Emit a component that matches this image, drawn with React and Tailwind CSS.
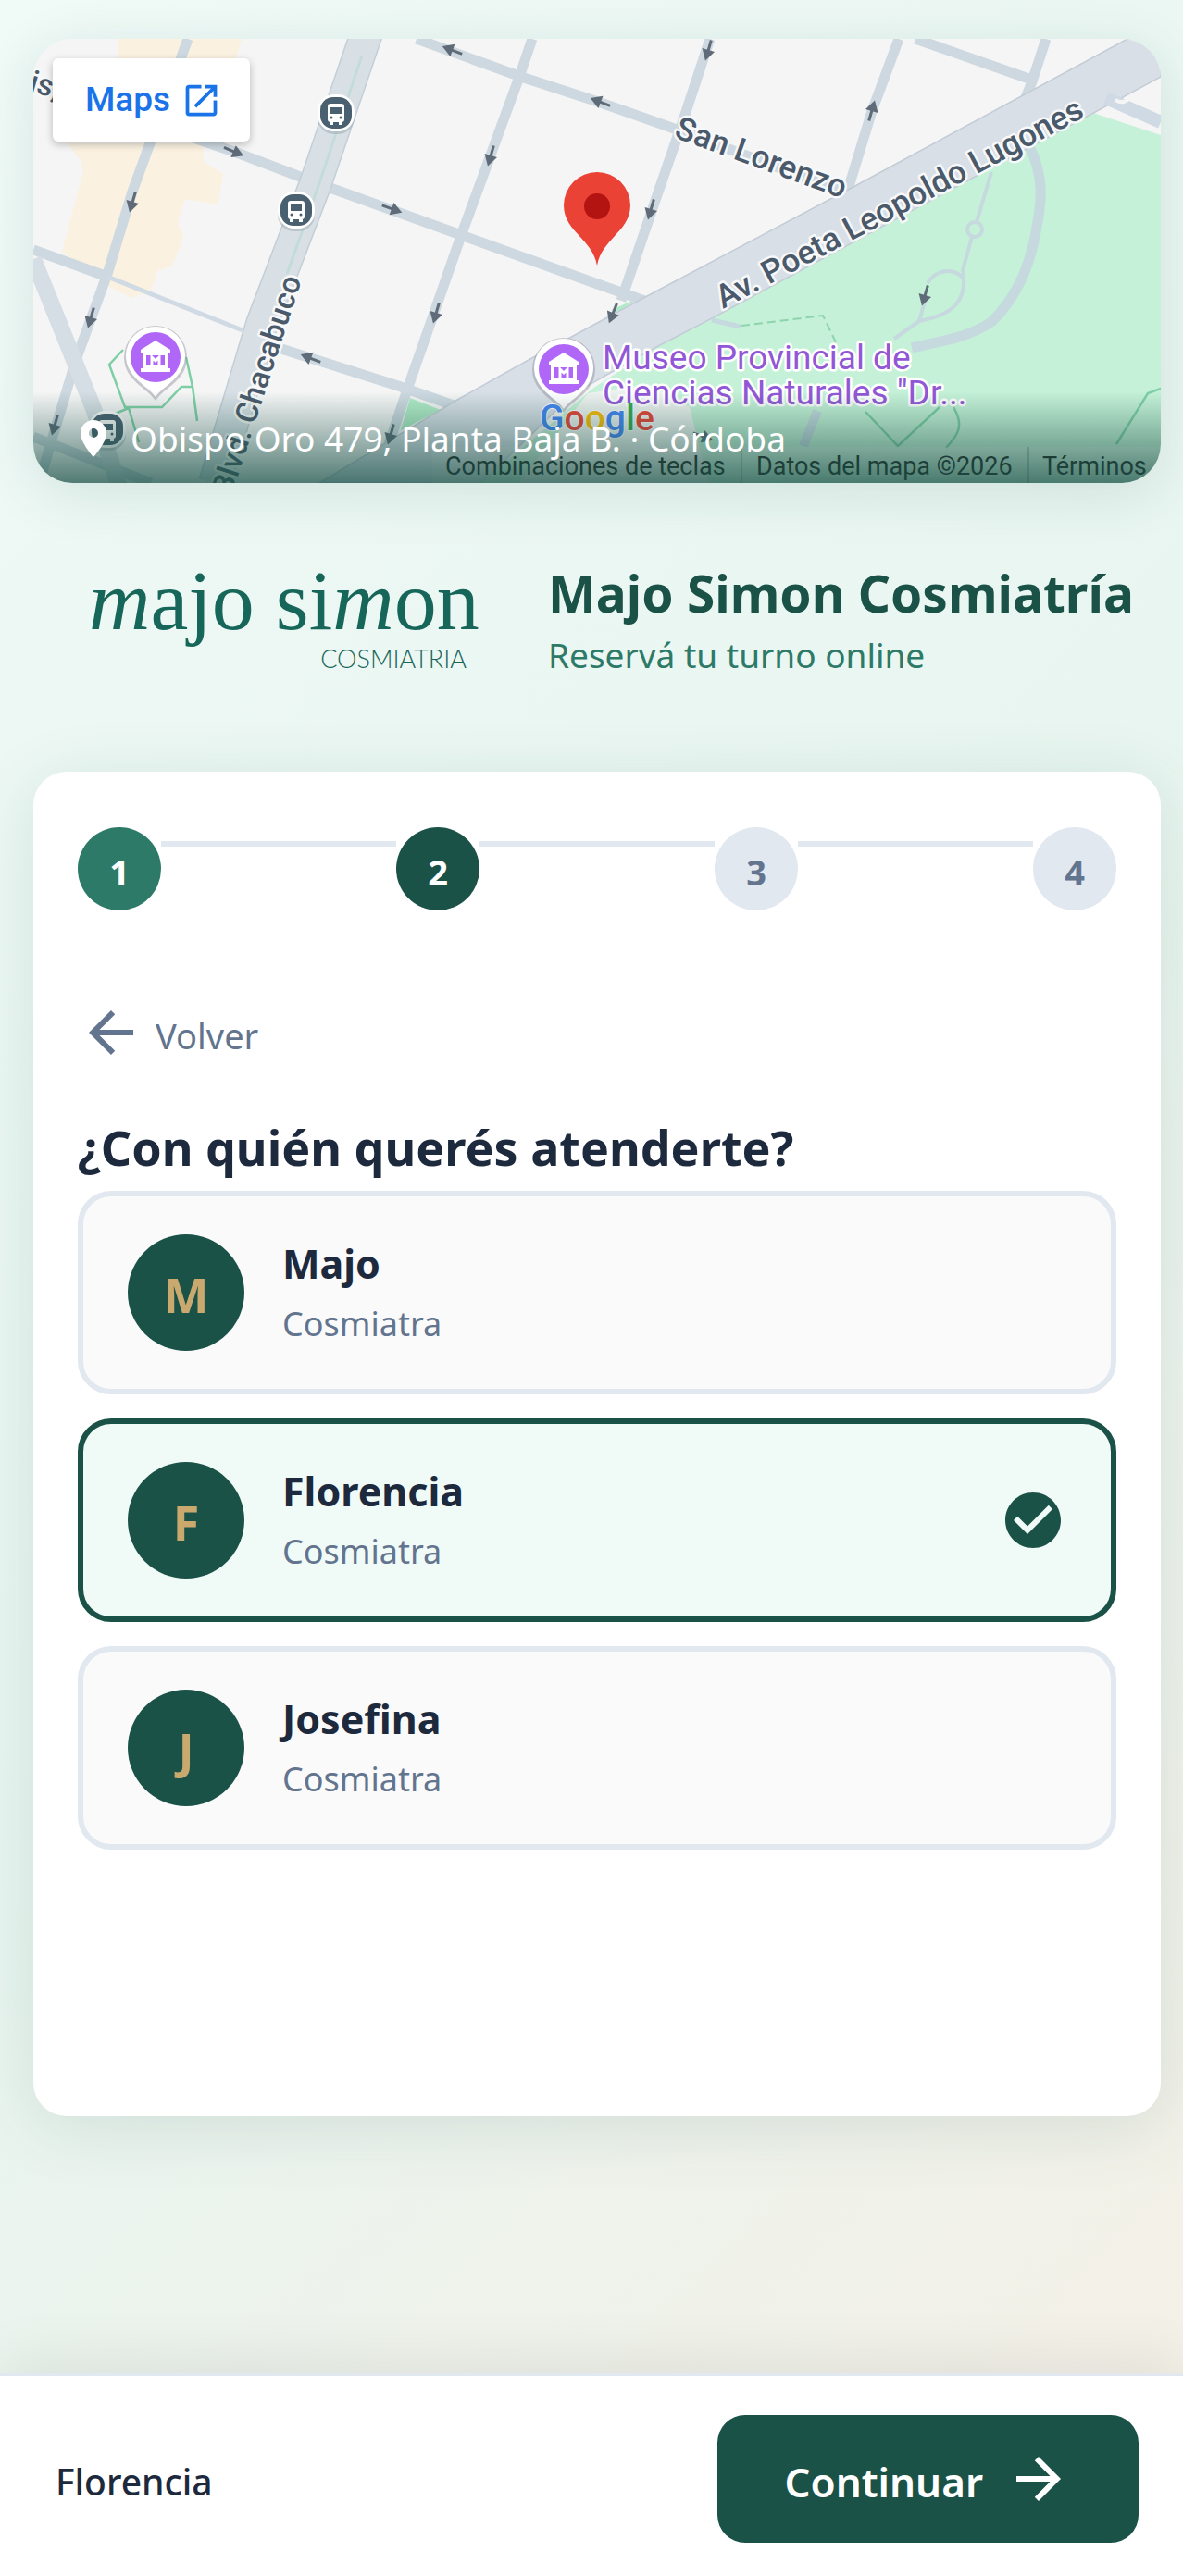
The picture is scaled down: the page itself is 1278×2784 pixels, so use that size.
import { useState } from 'react';
import { MdArrowBack, MdArrowForward, MdCheckCircle, MdLocationOn, MdOpenInNew } from 'react-icons/md';

const STEPS = [1, 2, 3, 4];

const PROFESSIONALS = [
  { id: 'majo', name: 'Majo', role: 'Cosmiatra' },
  { id: 'florencia', name: 'Florencia', role: 'Cosmiatra' },
  { id: 'josefina', name: 'Josefina', role: 'Cosmiatra' },
];

// [x, y, angle] of the one-way arrows
const ARROWS = [
  [488, 54, 201], [253, 164, 23], [424, 226, 20], [335, 387, 201],
  [530, 169, 106], [471, 339, 106], [143, 219, 106], [98, 344, 106],
  [59, 460, 106], [422, 470, 106], [765, 55, 106], [648, 110, 201],
  [942, 119, -74], [703, 227, 106], [662, 339, 112], [999, 320, 106],
  [760, 472, 20],
];

const BUS_STOPS = [[363, 123], [320, 228], [116, 465]];

const MUSEUMS = [[168, 386], [609, 399]];

function BusStop({ x, y }) {
  return (
    <g transform={`translate(${x} ${y})`}>
      <rect x="-20" y="-20" width="40" height="42" rx="18" fill="#9aa7b2" opacity="0.5" />
      <rect x="-20" y="-21" width="40" height="40" rx="18" fill="#fff" />
      <rect x="-17" y="-18" width="34" height="34" rx="14" fill="#48606f" />
      <rect x="-9" y="-11" width="18" height="20" rx="3" fill="#fff" />
      <rect x="-6" y="-7" width="12" height="7" fill="#48606f" />
      <circle cx="-5" cy="4" r="1.5" fill="#48606f" />
      <circle cx="5" cy="4" r="1.5" fill="#48606f" />
      <path d="M-7 9h4v3h-4zM3 9h4v3H3z" fill="#fff" />
    </g>
  );
}

function MuseumPin({ x, y }) {
  return (
    <g transform={`translate(${x} ${y})`}>
      <path d="M0 47C-9 33-34 25-34 0A34 34 0 0 1 34 0C34 25 9 33 0 47Z" fill="#8f8f9c" opacity="0.45" />
      <path d="M0 43C-9 30-32 22-32-2A32 31 0 0 1 32-2C32 22 9 30 0 43Z" fill="#fff" />
      <circle r="27" fill="#b067f7" />
      <path d="M-16-8 0-18 16-8v4h-32z" fill="#fff" />
      <path d="M-16 12h32v4h-32z" fill="#fff" />
      <path d="M-12-4h24v15h-24z" fill="none" stroke="#fff" strokeWidth="4" />
      <path d="M-4 10V0L0 4l4-4v10" fill="none" stroke="#fff" strokeWidth="3" />
    </g>
  );
}

function MapDrawing() {
  return (
    <svg
      viewBox="36 42 1218 480"
      preserveAspectRatio="xMidYMid slice"
      className="block h-full w-full font-['Roboto',sans-serif]"
      aria-hidden="true"
    >
      <rect x="36" y="42" width="1218" height="480" fill="#f5f5f5" />

      {/* shopping area */}
      <path
        d="M73 155 88 175 90 185 67 272 118 310 143 322 163 313 171 292 186 288 198 256 192 240 200 215 235 221 241 188 220 175 220 155Z"
        fill="#faf1e0"
      />
      <path d="M127 42h134l-6 21H127z" fill="#faf1e0" />

      {/* park */}
      <path d="M1181 122 1254 146V522H520L640 420 711 374 769 344Z" fill="#c4f1d7" />
      <path d="M560 522 635 425 700 415 745 440 765 522Z" fill="#edf2ef" />
      <path d="M443 430 476 443 433 465Z" fill="#b0ebc7" />
      <path d="M660 335 690 322 668 337Z" fill="#b0ebc7" />

      {/* streets */}
      <g fill="none" stroke="#cdd8e0" strokeWidth="11">
        <path d="M203 42 143 207 116 296 82 389 57 472 40 530" />
        <path d="M36 90 253 164 340 197 498 254 640 305 699 326" />
        <path d="M36 270 116 299" />
        <path d="M304 377 433 418 490 438" />
        <path d="M575 42 561 83 498 255 441 418 420 480" />
        <path d="M450 42 563 83 646 110 720 136 905 205" />
        <path d="M767 42 740 124 703 231 671 325" />
        <path d="M971 42 942 120 916 205" />
        <path d="M989 42 1120 88" />
        <path d="M1130 42 1115 88 1103 118" />
        <path d="M36 472 163 522" />
      </g>
      <path d="M116 299 262 357" fill="none" stroke="#d0dae4" strokeWidth="5" />
      <path d="M36 280 102 444 130 530" fill="none" stroke="#d5dee4" strokeWidth="18" />

      {/* avenues */}
      <path d="M396 36 341 198 283 350 232 522" fill="none" stroke="#c3ced6" strokeWidth="36" />
      <path d="M396 36 341 198 283 350 232 522" fill="none" stroke="#d8e0e6" strokeWidth="33" />
      <path d="M391 60 345 198 310 296" fill="none" stroke="#c3dcda" strokeWidth="3" />
      <path
        d="M1218 42H1254V83L769 344 711 374 620 425 520 522H345L494 432 571 389 699 320 920 203Z"
        fill="#d8dfe7"
        stroke="#c3ccd6"
        strokeWidth="1.5"
      />
      <path d="M1195 106 1254 132" stroke="#d0dae4" strokeWidth="14" fill="none" />
      <path d="M1205 108q10 6 16-4" stroke="#f5f5f5" strokeWidth="4" fill="none" />

      {/* park paths */}
      <g fill="none" stroke="#c5d9df">
        <path d="M1113 160C1127 190 1126 215 1120 245C1113 290 1095 325 1071 348C1045 365 1020 368 985 376" strokeWidth="11" />
        <path d="M883 444 868 482" strokeWidth="10" />
        <path d="M1071 186 1055 240M1050 256 1040 292C1046 325 1030 340 993 347L966 366" strokeWidth="4" />
        <path d="M1002 306C1012 290 1030 290 1040 300M993 347 1000 322" strokeWidth="4" />
        <circle cx="1053" cy="248" r="8" strokeWidth="4" />
        <path d="M769 346 800 353" strokeWidth="5" />
      </g>
      <path d="M801 352 889 341 903 370" fill="none" stroke="#8ed5ae" strokeWidth="2" strokeDasharray="9 5" />
      <g fill="none" stroke="#7fcfa6" strokeWidth="2.5">
        <path d="M133 378 118 394 135 440H175L196 418H208L201 386M208 418 213 455M122 448 139 441 150 478" />
        <path d="M1254 420 1240 425 1206 480M935 445 970 482 1015 440M1030 440C1042 460 1035 470 1022 484" />
      </g>

      {/* one-way arrows */}
      {ARROWS.map(([x, y, angle]) => (
        <g key={`${x}-${y}`} transform={`translate(${x} ${y}) rotate(${angle})`} fill="#5f6b78">
          <rect x="-12" y="-1.5" width="14" height="3" />
          <path d="M-1-7 11 0-1 7Z" />
        </g>
      ))}

      {/* street labels */}
      <g fill="#4b5a6b" stroke="#f7f8f9" strokeWidth="5" paintOrder="stroke" strokeLinejoin="round" fontWeight="500">
        <text transform="translate(727 148) rotate(20)" fontSize="35">San Lorenzo</text>
        <text transform="translate(781 334) rotate(-28)" fontSize="35">Av. Poeta Leopoldo Lugones</text>
        <text transform="translate(326 302) rotate(-72)" fontSize="33" textAnchor="end">Blvd. Chacabuco</text>
        <text transform="translate(30 98) rotate(16)" fontSize="33">is,</text>
      </g>

      {BUS_STOPS.map(([x, y]) => <BusStop key={x} x={x} y={y} />)}
      {MUSEUMS.map(([x, y]) => <MuseumPin key={x} x={x} y={y} />)}

      <g fill="#9257d6" stroke="#fff" strokeWidth="5" paintOrder="stroke" strokeLinejoin="round" fontSize="37">
        <text x="651" y="399">Museo Provincial de</text>
        <text x="651" y="437">Ciencias Naturales "Dr...</text>
      </g>

      {/* location marker */}
      <path d="M645 287C640 258 609 250 609 222A36 36 0 0 1 681 222C681 250 650 258 645 287Z" fill="#ea4335" />
      <circle cx="645" cy="223" r="14" fill="#b31412" />

      <text x="583" y="465" fontSize="39" fontWeight="500" stroke="#fff" strokeWidth="2" paintOrder="stroke">
        <tspan fill="#4285f4">G</tspan>
        <tspan fill="#ea4335">o</tspan>
        <tspan fill="#fbbc04">o</tspan>
        <tspan fill="#4285f4">g</tspan>
        <tspan fill="#34a853">l</tspan>
        <tspan fill="#ea4335">e</tspan>
      </text>

      {/* attribution strip */}
      <rect x="467" y="483" width="787" height="39" fill="#f5f5f5" opacity="0.3" />
      <path d="M801 483v39M1111 483v39" stroke="#a9c9bb" strokeWidth="2" />
      <g fill="#222" fontSize="27">
        <text x="481" y="513">Combinaciones de teclas</text>
        <text x="817" y="513">Datos del mapa ©2026</text>
        <text x="1126" y="513">Términos</text>
      </g>
    </svg>
  );
}

function LocationMap() {
  return (
    <section className="relative h-[480px] overflow-hidden rounded-[42px] shadow-[0_12px_60px_rgba(26,82,72,0.12)]">
      <MapDrawing />
      <a
        href="#mapa"
        className="absolute top-[21px] left-[21px] flex h-[90px] items-center gap-[11px] rounded-md bg-white pr-[30px] pl-[35px] font-['Roboto',sans-serif] text-[37px] font-medium text-[#1a73e8] shadow-[0_3px_9px_rgba(0,0,0,0.25)]"
      >
        Maps
        <MdOpenInNew className="size-[45px]" />
      </a>
      <div className="absolute inset-x-0 bottom-0 flex items-center gap-4 bg-linear-to-b from-[#1b5248]/0 to-[#1b5248]/75 pt-[27px] pr-6 pb-6 pl-[41px] text-[37px] leading-[48px] text-white">
        <MdLocationOn className="size-12 shrink-0" />
        <span>Obispo Oro 479, Planta Baja B. · Córdoba</span>
      </div>
    </section>
  );
}

function Logo() {
  return (
    <svg viewBox="0 0 450 140" className="w-[450px] shrink-0" role="img" aria-label="Majo Simon Cosmiatria">
      <g fill="#17665a">
        <text x="16" y="80" fontSize="92" className="font-['Liberation_Serif',serif]">
          <tspan fontStyle="italic">m</tspan>
          <tspan>ajo si</tspan>
          <tspan fontStyle="italic">m</tspan>
          <tspan>on</tspan>
        </text>
        <text x="424" y="122" fontSize="27" textAnchor="end" className="font-['Lato',sans-serif] font-light">
          COSMIATRIA
        </text>
      </g>
    </svg>
  );
}

function getStepColor(step, current) {
  if (step < current) return 'bg-[#2d7a68] text-white';
  if (step === current) return 'bg-[#1b5248] text-white';
  return 'bg-slate-200 text-slate-500';
}

function Stepper({ current }) {
  return (
    <ol className="flex items-start">
      {STEPS.map((step) => (
        <li key={step} className={step > 1 ? 'flex flex-1 items-start' : 'flex items-start'}>
          {step > 1 && <span className="mt-[15px] h-[6px] flex-1 bg-slate-200" />}
          <span
            className={`flex size-[90px] shrink-0 items-center justify-center rounded-full pt-[6px] text-[38px] font-bold ${getStepColor(step, current)}`}
          >
            {step}
          </span>
        </li>
      ))}
    </ol>
  );
}

function ProfessionalCard({ person, selected, onSelect }) {
  return (
    <button
      type="button"
      aria-pressed={selected}
      onClick={onSelect}
      className={`flex w-full items-center gap-[41px] rounded-[36px] border-[6px] px-12 py-[41px] text-left ${
        selected ? 'border-[#1b5248] bg-[#f0faf7]' : 'border-slate-200 bg-[#fafafa]'
      }`}
    >
      <span className="flex size-[126px] shrink-0 items-center justify-center rounded-full bg-[#1b5248] pt-1 text-[52px] font-bold text-[#c9a96e]">
        {person.name[0]}
      </span>
      <span className="flex flex-1 flex-col gap-2">
        <span className="text-[43px] leading-[60px] font-bold text-slate-800">{person.name}</span>
        <span className="text-[36px] leading-[54px] text-slate-500">{person.role}</span>
      </span>
      {selected && <MdCheckCircle className="size-[72px] shrink-0 text-[#1b5248]" />}
    </button>
  );
}

export default function App() {
  const [selectedId, setSelectedId] = useState('florencia');
  const selected = PROFESSIONALS.find((p) => p.id === selectedId);

  return (
    <div className="flex min-h-screen flex-col bg-[linear-gradient(135deg,#f0faf7_0%,#e8f5f0_50%,#f5f0e6_100%)] font-['Noto_Sans',sans-serif]">
      <main className="pt-[42px] pr-6 pb-24 pl-9">
        <LocationMap />

        <header className="flex items-center gap-[62px] pt-[78px] pb-[94px] pl-11">
          <Logo />
          <div>
            <h1 className="text-[55px] leading-[72px] font-bold text-[#1b5248]">Majo Simon Cosmiatría</h1>
            <p className="mt-1 text-[37px] leading-[54px] text-[#2d7a68]">Reservá tu turno online</p>
          </div>
        </header>

        <section className="rounded-[36px] bg-white px-12 pt-[60px] pb-72 shadow-[0_12px_72px_rgba(26,82,72,0.12)]">
          <Stepper current={2} />

          <button type="button" className="mt-24 flex items-center gap-3 text-[38px] text-slate-500">
            <MdArrowBack className="size-[72px]" />
            <span className="pt-[6px]">Volver</span>
          </button>

          <h2 className="mt-[52px] mb-[11px] text-[52px] leading-[72px] font-bold text-slate-800">
            ¿Con quién querés atenderte?
          </h2>

          <div className="flex flex-col gap-[26px]">
            {PROFESSIONALS.map((person) => (
              <ProfessionalCard
                key={person.id}
                person={person}
                selected={person.id === selectedId}
                onSelect={() => setSelectedId(person.id)}
              />
            ))}
          </div>
        </section>
      </main>

      <footer className="mt-auto flex items-center justify-between border-t-[3px] border-slate-200 bg-white pt-[42px] pr-12 pb-9 pl-[60px] shadow-[0_-12px_60px_rgba(0,0,0,0.08)]">
        <span className="pt-[6px] text-[39px] font-medium text-slate-800">{selected.name}</span>
        <button
          type="button"
          className="flex h-[138px] items-center gap-6 rounded-[30px] bg-[#1b5248] px-[72px] text-[44px] font-semibold text-white"
        >
          <span className="pt-[6px]">Continuar</span>
          <MdArrowForward className="size-[72px]" />
        </button>
      </footer>
    </div>
  );
}
